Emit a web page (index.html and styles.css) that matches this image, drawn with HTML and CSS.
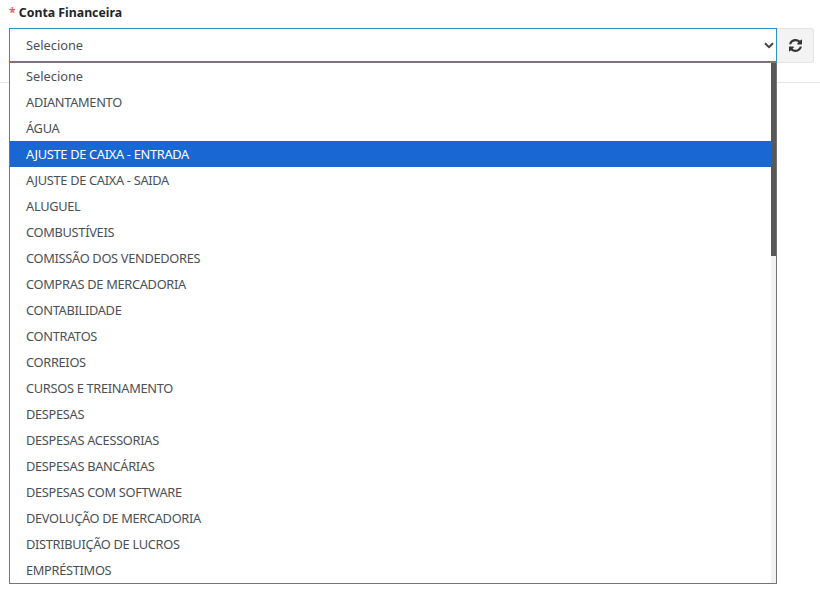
FILE: index.html
```html
<!DOCTYPE html>
<html lang="pt-BR">
<head>
<meta charset="utf-8">
<title>Conta Financeira</title>
<link rel="stylesheet" href="styles.css">
</head>
<body>
<div class="field">
  <label class="label"><span class="req">*</span> Conta Financeira</label>
  <div class="group">
    <div class="select">
      <span>Selecione</span>
      <svg class="chev" width="10" height="7" viewBox="0 0 10 7"><path d="M1 1.2 5 5.2 9 1.2" fill="none" stroke="#444" stroke-width="2"/></svg>
      <div class="menu">
        <ul class="list">
          <li class="plain">Selecione</li>
          <li>ADIANTAMENTO</li>
          <li>ÁGUA</li>
          <li class="active">AJUSTE DE CAIXA - ENTRADA</li>
          <li>AJUSTE DE CAIXA - SAIDA</li>
          <li>ALUGUEL</li>
          <li>COMBUSTÍVEIS</li>
          <li>COMISSÃO DOS VENDEDORES</li>
          <li>COMPRAS DE MERCADORIA</li>
          <li>CONTABILIDADE</li>
          <li>CONTRATOS</li>
          <li>CORREIOS</li>
          <li>CURSOS E TREINAMENTO</li>
          <li>DESPESAS</li>
          <li>DESPESAS ACESSORIAS</li>
          <li>DESPESAS BANCÁRIAS</li>
          <li>DESPESAS COM SOFTWARE</li>
          <li>DEVOLUÇÃO DE MERCADORIA</li>
          <li>DISTRIBUIÇÃO DE LUCROS</li>
          <li>EMPRÉSTIMOS</li>
        </ul>
        <div class="track"><div class="thumb"></div></div>
      </div>
    </div>
    <button class="refresh" type="button" aria-label="Atualizar">
      <svg width="13" height="13" viewBox="0 0 1536 1536"><path fill="#333" d="M1511 928q0 5-1 7-64 268-268 434.500T764 1536q-146 0-282.500-55T238 1324l-129 129q-19 19-45 19t-45-19-19-45V960q0-26 19-45t45-19h448q26 0 45 19t19 45-19 45L420 1142q71 66 161 102t187 36q134 0 250-65t186-179q11-17 53-117 8-23 30-23h192q13 0 22.500 9.500t9.500 22.500zM1536 128v448q0 26-19 45t-45 19h-448q-26 0-45-19t-19-45 19-45l138-138q-148-137-349-137-134 0-250 65T332 480q-11 17-53 117-8 23-30 23H50q-13 0-22.500-9.500T18 588v-7q65-268 270-434.500T768 0q146 0 284 55.500T1297 212l130-129q19-19 45-19t45 19 19 45z"/></svg>
    </button>
  </div>
</div>
<hr class="rule">
</body>
</html>
```
FILE: styles.css
```css
html, body {
  margin: 0;
  height: 591px;
  overflow: hidden;
  background: #fff;
}
body {
  font-family: "Noto Sans", "Liberation Sans", sans-serif;
  font-size: 12.8px;
  color: #495057;
}
.field {
  padding: 5px 6px 0 9px;
}
.label {
  display: block;
  height: 23px;
  line-height: 16px;
  font-weight: 700;
  font-size: 12.3px;
  color: #212529;
}
.req {
  color: #e4606d;
  font-size: 12.3px;
}
.group {
  display: flex;
  height: 35px;
}
.select {
  position: relative;
  flex: 1;
  box-sizing: border-box;
  display: flex;
  align-items: center;
  justify-content: space-between;
  padding: 0 2px 0 16px;
  border: 1px solid #2f8fc4;
  border-bottom-width: 2px;
  background: #fff;
}
.chev {
  margin-top: 1px;
}
.refresh {
  width: 37px;
  padding: 0;
  display: flex;
  align-items: center;
  justify-content: center;
  background: #f3f3f3;
  border: 1px solid #e4e4e4;
  border-left: 0;
  border-radius: 0 3px 3px 0;
}
.rule {
  margin: 19px 0 0;
  border: 0;
  border-top: 1px solid #e5e5e5;
}
.menu {
  position: absolute;
  left: -1px;
  right: -1px;
  top: 33px;
  height: 522px;
  box-sizing: border-box;
  border: 1px solid #767676;
  background: #fff;
  display: flex;
  overflow: hidden;
}
.list {
  flex: 1;
  margin: 0;
  padding: 0;
  list-style: none;
}
.list li {
  height: 26px;
  line-height: 26px;
  padding-left: 16px;
  white-space: nowrap;
  letter-spacing: -0.3px;
}
.list li.plain {
  letter-spacing: 0;
}
.list li.active {
  background: #1967d2;
  color: #fff;
}
.track {
  width: 5px;
  background: #f1f1f1;
}
.thumb {
  height: 193px;
  background: #585858;
}
```
